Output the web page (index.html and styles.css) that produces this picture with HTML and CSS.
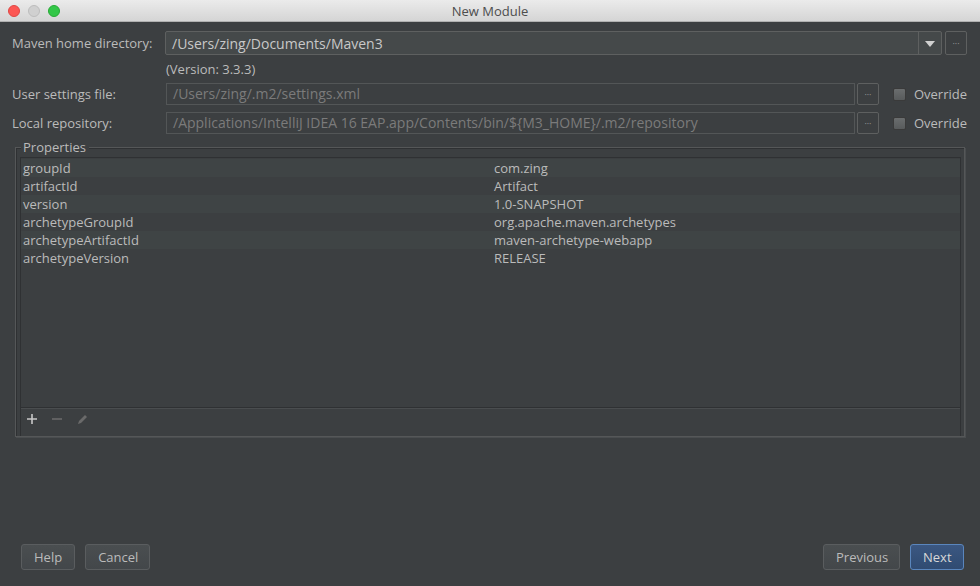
FILE: index.html
```html
<!DOCTYPE html>
<html lang="en">
<head>
    <meta charset="UTF-8">
    <title>New Module</title>
    <link rel="stylesheet" href="styles.css">
</head>
<body>
    <div class="window">
        <div class="titlebar">
            <div class="lights">
                <span class="light red"></span>
                <span class="light gray"></span>
                <span class="light green"></span>
            </div>
            <div class="title">New Module</div>
        </div>

        <div class="content">
            <div class="form">
                <label class="label">Maven home directory:</label>
                <div class="line">
                    <div class="combo">
                        <span class="combo-text">/Users/zing/Documents/Maven3</span>
                        <span class="combo-arrow"></span>
                    </div>
                    <button class="dots big">···</button>
                </div>

                <span></span>
                <div class="version">(Version: 3.3.3)</div>

                <label class="label">User settings file:</label>
                <div class="line">
                    <div class="field">/Users/zing/.m2/settings.xml</div>
                    <button class="dots">···</button>
                    <span class="check"></span>
                    <span class="check-label">Override</span>
                </div>

                <label class="label">Local repository:</label>
                <div class="line">
                    <div class="field">/Applications/IntelliJ IDEA 16 EAP.app/Contents/bin/${M3_HOME}/.m2/repository</div>
                    <button class="dots">···</button>
                    <span class="check"></span>
                    <span class="check-label">Override</span>
                </div>
            </div>

            <div class="group">
                <div class="group-title">Properties</div>
                <div class="table">
                    <div class="rows">
                        <div class="row"><span class="key">groupId</span><span class="val">com.zing</span></div>
                        <div class="row"><span class="key">artifactId</span><span class="val">Artifact</span></div>
                        <div class="row"><span class="key">version</span><span class="val">1.0-SNAPSHOT</span></div>
                        <div class="row"><span class="key">archetypeGroupId</span><span class="val">org.apache.maven.archetypes</span></div>
                        <div class="row"><span class="key">archetypeArtifactId</span><span class="val">maven-archetype-webapp</span></div>
                        <div class="row"><span class="key">archetypeVersion</span><span class="val">RELEASE</span></div>
                    </div>
                    <div class="toolbar">
                        <svg width="12" height="12" viewBox="0 0 12 12"><path d="M6 1v10M1 6h10" stroke="#c8c8c8" stroke-width="1.6"/></svg>
                        <svg width="12" height="12" viewBox="0 0 12 12"><path d="M1 6h10" stroke="#6a6a6a" stroke-width="1.6"/></svg>
                        <svg width="12" height="12" viewBox="0 0 12 12"><path d="M2 11l1-3 6-6 2 2-6 6z" fill="#6a6a6a"/></svg>
                    </div>
                </div>
            </div>

            <div class="buttons">
                <button class="btn">Help</button>
                <button class="btn cancel">Cancel</button>
                <span class="spacer"></span>
                <button class="btn prev">Previous</button>
                <button class="btn primary">Next</button>
            </div>
        </div>
    </div>
</body>
</html>
```

FILE: styles.css
```css
body {
    margin: 0;
    background-color: #3c3f41;
    font-family: "Open Sans", "DejaVu Sans", sans-serif;
    font-size: 13px;
    color: #bbbbbb;
    overflow: hidden;
}
.window {
    width: 980px;
    height: 586px;
    display: flex;
    flex-direction: column;
}
.titlebar {
    height: 22px;
    background: linear-gradient(#ebebeb, #d5d5d5);
    border-bottom: 1px solid #b0b0b0;
    box-sizing: border-box;
    position: relative;
    display: flex;
    align-items: center;
    justify-content: center;
}
.lights {
    position: absolute;
    left: 8px;
    top: 5px;
    display: flex;
    gap: 8px;
}
.light {
    width: 12px;
    height: 12px;
    border-radius: 50%;
    box-sizing: border-box;
}
.red { background-color: #fc5753; border: 1px solid #df4744; }
.gray { background-color: #d0d0d0; border: 1px solid #bdbdbd; }
.green { background-color: #33c748; border: 1px solid #27aa35; }
.title {
    color: #4d4d4d;
    font-size: 13px;
}
.content {
    flex: 1;
    display: flex;
    flex-direction: column;
    padding: 9px 13px 16px 12px;
}
.form {
    display: grid;
    grid-template-columns: 153px 1fr;
    row-gap: 7px;
    align-items: center;
}
.label {
    white-space: nowrap;
}
.line {
    display: flex;
    align-items: center;
}
.combo {
    flex: 1;
    height: 24px;
    box-sizing: border-box;
    border: 1px solid #5e6060;
    border-radius: 2px;
    background-color: #45494a;
    display: flex;
    align-items: center;
    color: #c8c8c8;
    font-size: 14px;
}
.combo-text {
    flex: 1;
    padding-left: 6px;
}
.combo-arrow {
    width: 22px;
    height: 22px;
    border-left: 1px solid #5e6060;
    position: relative;
}
.combo-arrow::after {
    content: "";
    position: absolute;
    left: 6px;
    top: 9px;
    border-left: 5px solid transparent;
    border-right: 5px solid transparent;
    border-top: 6px solid #d0d0d0;
}
.dots {
    width: 22px;
    height: 22px;
    margin-left: 2px;
    border: 1px solid #5e6060;
    border-radius: 2px;
    background-color: #3c3f41;
    color: #9a9a9a;
    font-size: 9px;
    padding: 0;
    font-family: inherit;
}
.dots.big {
    height: 24px;
    margin-left: 3px;
}
.version {
    margin: -2px 0 -2px 1px;
}
.field {
    flex: 1;
    height: 22px;
    box-sizing: border-box;
    margin-left: 1px;
    border: 1px solid #535657;
    background-color: #3c3f41;
    color: #7b7b7b;
    padding-left: 6px;
    line-height: 20px;
    font-size: 14px;
    white-space: nowrap;
    overflow: hidden;
}
.check {
    width: 13px;
    height: 13px;
    margin-left: 14px;
    box-sizing: border-box;
    border: 1px solid #3a3a3a;
    border-radius: 2px;
    background: linear-gradient(#6a6d6e, #585b5c);
}
.check-label {
    margin-left: 8px;
    color: #bbbbbb;
}
.group {
    margin-top: 13px;
    margin-left: 3px;
    margin-right: 2px;
    border: 1px solid #555758;
    box-shadow: inset 1px 1px 0 #2f3133, 1px 1px 0 #4a4d4f;
    padding: 9px 3px 0 4px;
    height: 290px;
    box-sizing: border-box;
    position: relative;
    display: flex;
    flex-direction: column;
}
.group-title {
    position: absolute;
    left: 5px;
    top: -9px;
    padding: 0 3px 0 2px;
    background-color: #3c3f41;
    line-height: 16px;
}
.table {
    flex: 1;
    border: 1px solid #2f3133;
    border-bottom: none;
    display: flex;
    flex-direction: column;
}
.rows {
    flex: 1;
    border-bottom: 1px solid #2f3133;
    box-shadow: 0 1px 0 #4a4d4f;
    padding-top: 1px;
}
.row {
    display: flex;
    height: 18px;
    line-height: 18px;
    padding-left: 2px;
}
.row:nth-child(odd) {
    background-color: #3f4445;
}
.key {
    width: 471px;
}
.toolbar {
    height: 22px;
    padding-bottom: 6px;
    display: flex;
    align-items: center;
    gap: 13px;
    padding-left: 5px;
}
.buttons {
    margin-top: auto;
    display: flex;
    align-items: center;
    gap: 10px;
    padding-left: 9px;
    padding-right: 3px;
}
.spacer {
    flex: 1;
}
.btn {
    height: 26px;
    box-sizing: border-box;
    padding: 0 12px;
    border: 1px solid #5a5d5f;
    border-radius: 3px;
    background: linear-gradient(#4a4e50, #43474a);
    color: #bbbbbb;
    font-family: inherit;
    font-size: 13px;
}
.btn.cancel {
    width: 65px;
}
.btn.prev {
    width: 77px;
}
.btn.primary {
    width: 54px;
    background: linear-gradient(#3b5781, #304b72);
    border-color: #5a86bd;
    color: #d8d8d8;
}
```
